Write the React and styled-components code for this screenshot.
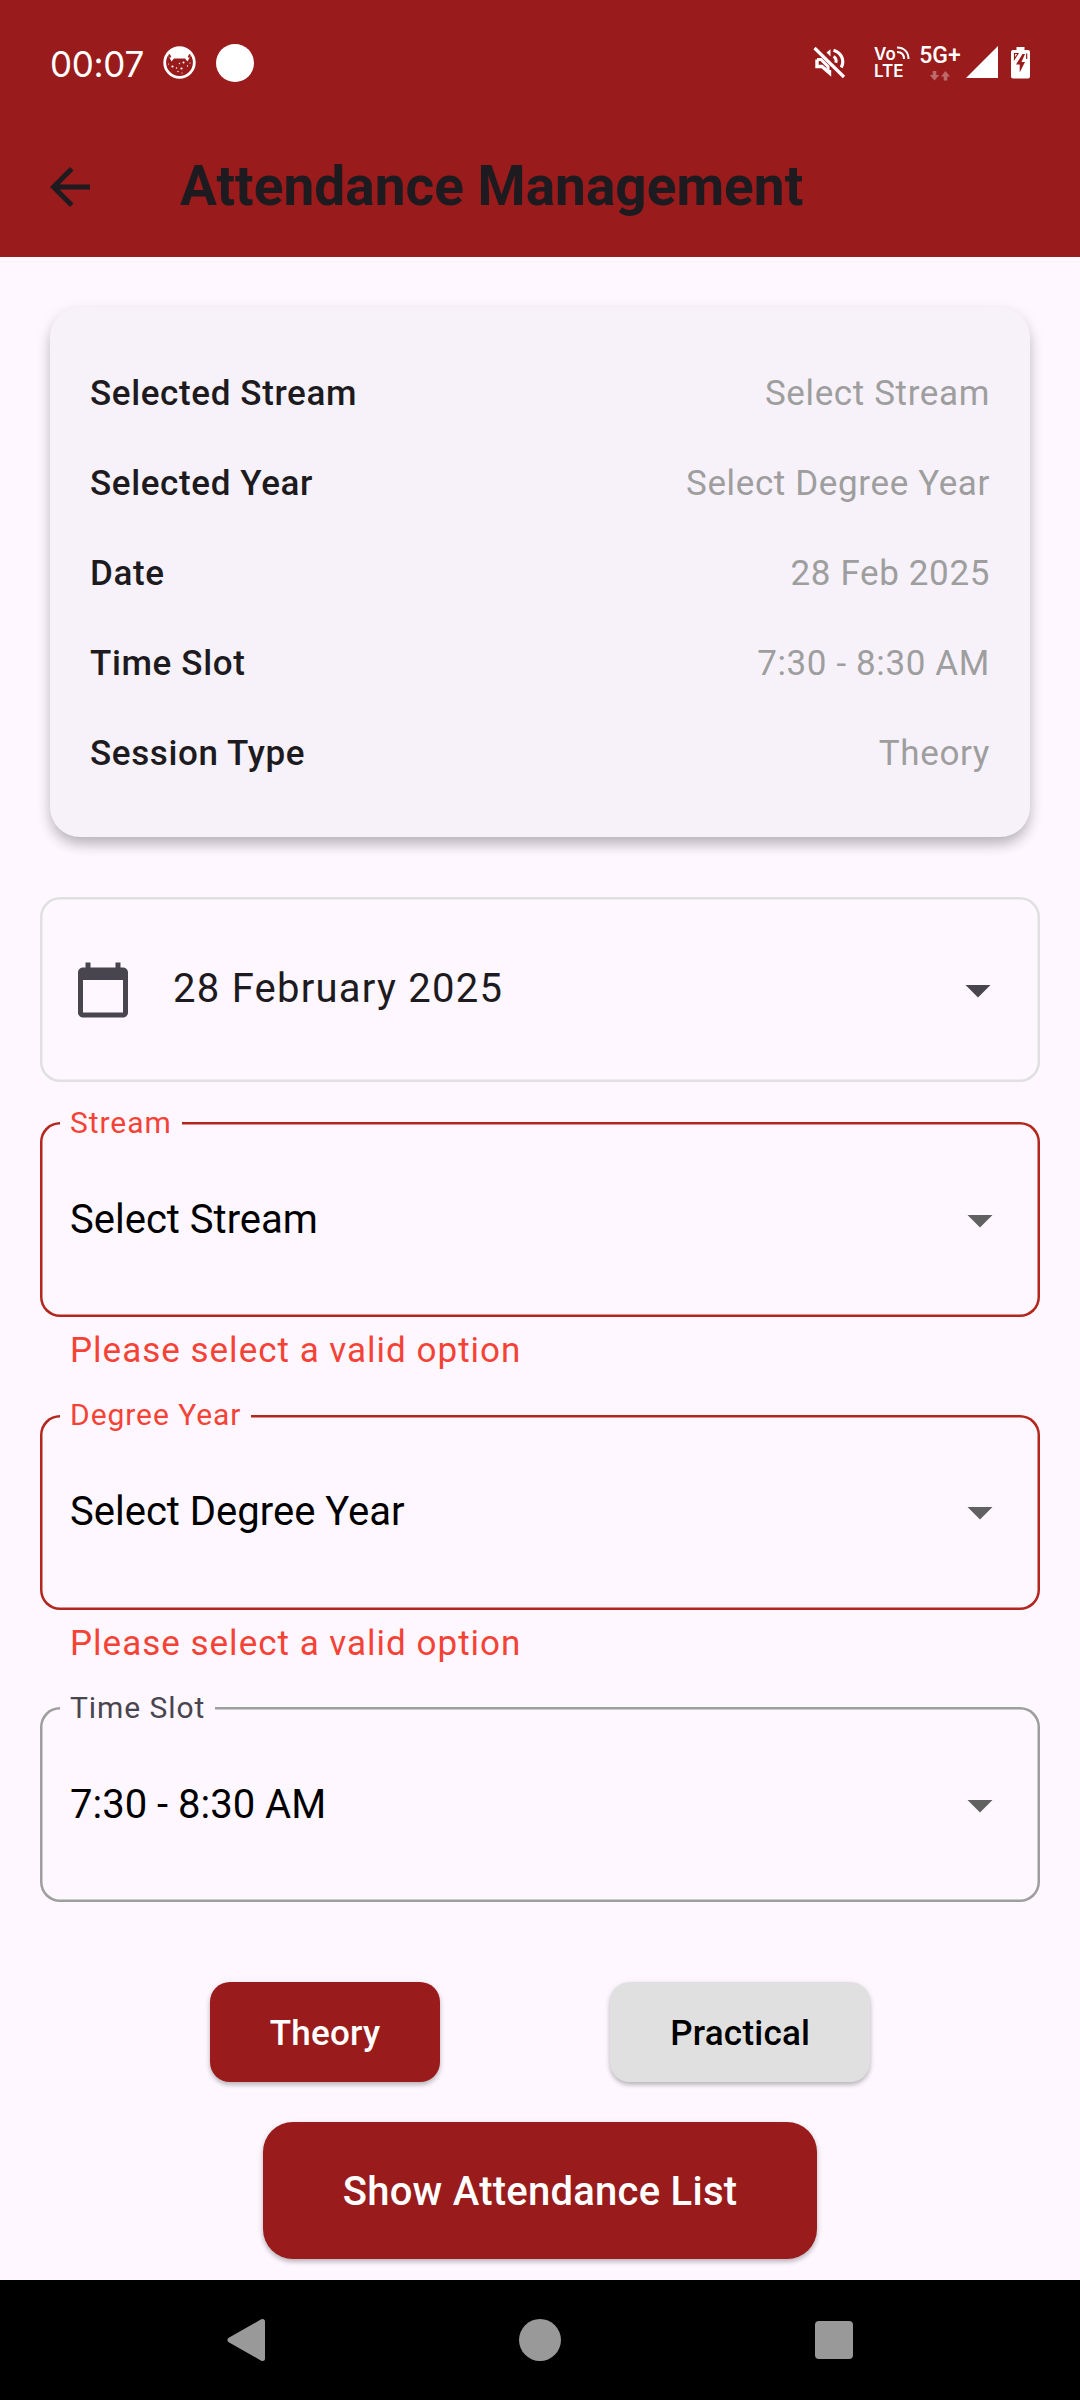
import React, { useState } from "react";
import styled, { createGlobalStyle } from "styled-components";

const GlobalStyle = createGlobalStyle`
  *, *::before, *::after { box-sizing: border-box; }
  html, body { margin: 0; padding: 0; background: #fef7ff; }
  body { font-family: Roboto, "Liberation Sans", sans-serif; }
  button { font: inherit; border: 0; margin: 0; padding: 0; background: none; cursor: pointer; }
`;

const Screen = styled.div`
  display: flex;
  flex-direction: column;
  width: 1080px;
  height: 2400px;
  background: #fef7ff;
  color: #1d1b20;
  overflow: hidden;
`;

const StatusBar = styled.header`
  display: flex;
  justify-content: space-between;
  align-items: center;
  height: 117px;
  padding: 8px 50px 0 50px;
  background: #991b1b;
  color: #fff;
`;

const StatusGroup = styled.div`
  display: flex;
  align-items: center;
`;

const Clock = styled.span`
  width: 113px;
  padding-top: 3px;
  font-family: Inter, sans-serif;
  font-size: 35px;
  line-height: 40px;
  letter-spacing: -0.3px;
`;

const NotificationDot = styled.span`
  width: 38px;
  height: 38px;
  margin-left: 20px;
  border-radius: 50%;
  background: #fff;
`;

const VoLte = styled.span`
  display: flex;
  flex-direction: column;
  width: 36px;
  margin-left: 28px;
  font: 600 17px/17px Inter, sans-serif;
`;

const VoRow = styled.span`
  display: flex;
  align-items: flex-start;
  height: 17px;
`;

const Network = styled.span`
  display: flex;
  flex-direction: column;
  align-items: center;
  gap: 4px;
  width: 42px;
  height: 36px;
  margin-left: 9px;
  font: 500 23px/22px Roboto, sans-serif;
`;

const AppBar = styled.div`
  display: flex;
  align-items: center;
  height: 140px;
  padding-left: 40px;
  gap: 80px;
  background: #991b1b;
`;

const BackButton = styled.button`
  display: flex;
  width: 60px;
  height: 60px;
  color: #1d1b20;
`;

const Title = styled.h1`
  margin: 0 0 2px;
  font-size: 55px;
  line-height: 70px;
  font-weight: 700;
`;

const Content = styled.main`
  display: flex;
  flex-direction: column;
  height: 2023px;
  padding: 50px 40px 0;
`;

const SummaryCard = styled.section`
  margin: 0 10px;
  padding: 42px 40px 38px;
  border-radius: 30px;
  background: #f7f2fa;
  box-shadow: 0 9px 14px -2px rgba(0, 0, 0, 0.2), 0 5px 15px rgba(0, 0, 0, 0.12);
`;

const SummaryRow = styled.div`
  display: flex;
  justify-content: space-between;
  align-items: center;
  height: 90px;
  font-size: 35px;
  line-height: 50px;
`;

const SummaryLabel = styled.span`
  font-weight: 500;
  letter-spacing: 0.625px;
`;

const SummaryValue = styled.span`
  color: #9e9e9e;
  letter-spacing: 0.625px;
`;

const Fields = styled.div`
  display: flex;
  flex-direction: column;
  margin-top: 60px;
`;

const DateField = styled.button`
  display: flex;
  align-items: center;
  height: 185px;
  margin-bottom: 40px;
  padding: 0 32.5px;
  border-radius: 20px;
  box-shadow: inset 0 0 0 2.5px #e0e0e0;
  color: #49454f;
  text-align: left;
`;

const DateText = styled.span`
  flex: 1;
  margin: 0 0 2px 40.5px;
  color: #1d1b20;
  font-size: 40px;
  line-height: 60px;
  letter-spacing: 1.25px;
`;

const FieldGroup = styled.div`
  height: ${(p) => (p.$error ? "292.5px" : "195px")};
`;

const Outline = styled.div`
  position: relative;
  display: flex;
  align-items: center;
  justify-content: space-between;
  height: 195px;
  padding: 0 30px;
  border-radius: 20px;
  box-shadow: inset 0 0 0 2.5px ${(p) => (p.$error ? "#b3261e" : "#9e9e9e")};
  color: #616161;
`;

const FloatingLabel = styled.label`
  position: absolute;
  top: -19.5px;
  left: 20px;
  padding: 0 10px;
  background: #fef7ff;
  color: ${(p) => (p.$error ? "#f44336" : "#49454f")};
  font-size: 30px;
  line-height: 40px;
  letter-spacing: 0.94px;
`;

const FieldValue = styled.span`
  color: #000;
  font-size: 40px;
  line-height: 60px;
`;

const ErrorText = styled.p`
  margin: 9px 30px 0;
  color: #f44336;
  font-size: 35px;
  line-height: 50px;
  letter-spacing: 1px;
`;

const SessionRow = styled.div`
  display: flex;
  justify-content: space-evenly;
  margin-top: 80px;
`;

const raised = "0 3px 4px rgba(0, 0, 0, 0.18), 0 2px 6px rgba(0, 0, 0, 0.12)";

const SessionButton = styled.button`
  height: 100px;
  border-radius: 20px;
  background: ${(p) => (p.$active ? "#991b1b" : "#e0e0e0")};
  color: ${(p) => (p.$active ? "#fff" : "#000")};
  box-shadow: ${raised};
  && { padding: 2px 60px 0; font-size: 35px; font-weight: 500; letter-spacing: 0.25px; }
`;

const SubmitButton = styled.button`
  align-self: center;
  height: 137px;
  margin-top: 40px;
  border-radius: 30px;
  background: #991b1b;
  color: #fff;
  box-shadow: ${raised};
  && { padding: 2px 80px 0; font-size: 40px; font-weight: 500; letter-spacing: 0.25px; }
`;

const NavBar = styled.nav`
  display: flex;
  align-items: center;
  justify-content: space-between;
  height: 120px;
  padding: 0 216px;
  background: #000;
`;

const NavButton = styled.button`
  display: flex;
  width: 60px;
  height: 60px;
`;

const DropIcon = () => (
  <svg width="60" height="60" viewBox="0 0 24 24" fill="currentColor">
    <path d="M7 10l5 5 5-5z" />
  </svg>
);

const CalendarIcon = () => (
  <svg width="60" height="60" viewBox="0 0 24 24" fill="currentColor">
    <path d="M20 3h-1V1h-2v2H7V1H5v2H4c-1.1 0-2 .9-2 2v16c0 1.1.9 2 2 2h16c1.1 0 2-.9 2-2V5c0-1.1-.9-2-2-2zm0 18H4V8h16v13z" />
  </svg>
);

const CatIcon = () => (
  <svg width="33" height="33" viewBox="0 0 33 33">
    <circle cx="16.5" cy="16.5" r="14.8" fill="none" stroke="#fff" strokeWidth="2.8" />
    <path d="M5 9C8 4 12 2 16.500 2S25 4 28 9L27 11L24.500 15.500L22 12.500H11L8.500 15.500L6 11Z" fill="#fff" />
    <path d="M6 8.500L7.500 11.500M27 8.500L25.500 11.500" stroke="#991b1b" strokeWidth="1.800" />
    <g fill="#fff">
      <circle cx="9.500" cy="20.500" r="1.100" />
      <circle cx="18.500" cy="22.500" r="1.100" />
      <circle cx="20.500" cy="16.500" r="1" />
      <circle cx="13.500" cy="22" r=".7" />
      <circle cx="24.500" cy="20" r=".7" />
      <circle cx="15" cy="25.500" r=".7" />
      <circle cx="16.500" cy="17.500" r=".7" />
      <circle cx="5.500" cy="18" r=".6" />
      <circle cx="27" cy="17" r=".6" />
      <circle cx="19" cy="27" r=".6" />
    </g>
  </svg>
);

const MuteIcon = () => (
  <svg width="33" height="33" viewBox="0 0 33 33" fill="none" stroke="#fff">
    <path d="M4 13.500V20.500H9L16.500 27V24" strokeWidth="3.400" />
    <path d="M4 13.500H8L15 20.500V26" strokeWidth="3" />
    <path d="M13.500 6.500L17.500 3.200V10.500Z" fill="#fff" stroke="none" />
    <path d="M20.500 10.500C23 12 23.500 14.500 22.800 16.800" strokeWidth="3" />
    <path d="M20.500 4.200C28.500 6.500 32 14.500 28.300 21.500" strokeWidth="3.200" />
    <path d="M1.500 2L31 31" strokeWidth="3.200" />
  </svg>
);

const WavesIcon = () => (
  <svg width="14" height="14" viewBox="0 0 14 14" fill="none" stroke="#fff" strokeWidth="2">
    <path d="M1 1.500C8 1.500 12.500 6 12.500 13" />
    <path d="M1 6C5.500 6 8 8.500 8 13" />
  </svg>
);

const DataArrows = () => (
  <svg width="20" height="10" viewBox="0 0 20 10" fill="#fff" opacity=".35">
    <path d="M2.700 0H6.300V4H9.200L4.500 9.500L-.2 4H2.700Z" />
    <path d="M13.700 9.500H17.300V5.500H20L15.500 0L11 5.500H13.700Z" />
  </svg>
);

const SignalIcon = styled.svg`
  margin-left: 4px;
`;

const BatteryIcon = styled.svg`
  margin-left: 13px;
`;

const SelectField = ({ label, value, error }) => (
  <FieldGroup $error={!!error}>
    <Outline $error={!!error}>
      <FloatingLabel $error={!!error}>{label}</FloatingLabel>
      <FieldValue>{value}</FieldValue>
      <DropIcon />
    </Outline>
    {error && <ErrorText>{error}</ErrorText>}
  </FieldGroup>
);

export default function App() {
  const [session, setSession] = useState("Theory");
  const summary = [
    ["Selected Stream", "Select Stream"],
    ["Selected Year", "Select Degree Year"],
    ["Date", "28 Feb 2025"],
    ["Time Slot", "7:30 - 8:30 AM"],
    ["Session Type", session],
  ];
  const error = "Please select a valid option";

  return (
    <Screen>
      <GlobalStyle />
      <StatusBar>
        <StatusGroup>
          <Clock>00:07</Clock>
          <CatIcon />
          <NotificationDot />
        </StatusGroup>
        <StatusGroup>
          <MuteIcon />
          <VoLte>
            <VoRow>Vo<WavesIcon /></VoRow>
            <span>LTE</span>
          </VoLte>
          <Network>5G+<DataArrows /></Network>
          <SignalIcon width="33" height="33" viewBox="0 0 33 33">
            <path d="M33 0V32H1Z" fill="#fff" />
          </SignalIcon>
          <BatteryIcon width="19" height="32" viewBox="0 0 19 32">
            <path d="M5.500 0H13.500V3H17Q19 3 19 5V29.500Q19 31.500 17 31.500H2Q0 31.500 0 29.500V5Q0 3 2 3H5.500Z" fill="#fff" />
            <path d="M11.500 7L5 17.500H8.700V25.500L14 15H10.500L14 7Z" fill="#991b1b" />
            <path d="M3.500 12V6.500H7ZM15.700 6.500V12" fill="none" stroke="#991b1b" strokeWidth="1.200" />
          </BatteryIcon>
        </StatusGroup>
      </StatusBar>
      <AppBar>
        <BackButton aria-label="Back">
          <svg width="60" height="60" viewBox="0 0 24 24" fill="currentColor">
            <path d="M20 11H7.830l5.590-5.590L12 4l-8 8 8 8 1.410-1.410L7.830 13H20v-2z" />
          </svg>
        </BackButton>
        <Title>Attendance Management</Title>
      </AppBar>
      <Content>
        <SummaryCard>
          {summary.map(([label, value]) => (
            <SummaryRow key={label}>
              <SummaryLabel>{label}</SummaryLabel>
              <SummaryValue>{value}</SummaryValue>
            </SummaryRow>
          ))}
        </SummaryCard>
        <Fields>
          <DateField>
            <CalendarIcon />
            <DateText>28 February 2025</DateText>
            <DropIcon />
          </DateField>
          <SelectField label="Stream" value="Select Stream" error={error} />
          <SelectField label="Degree Year" value="Select Degree Year" error={error} />
          <SelectField label="Time Slot" value="7:30 - 8:30 AM" />
        </Fields>
        <SessionRow>
          {["Theory", "Practical"].map((type) => (
            <SessionButton key={type} $active={session === type} onClick={() => setSession(type)}>
              {type}
            </SessionButton>
          ))}
        </SessionRow>
        <SubmitButton>Show Attendance List</SubmitButton>
      </Content>
      <NavBar>
        <NavButton aria-label="Back">
          <svg width="60" height="60" viewBox="0 0 60 60">
            <path d="M14 30L46.500 11.500V48.500Z" fill="#999" stroke="#999" strokeWidth="5" strokeLinejoin="round" />
          </svg>
        </NavButton>
        <NavButton aria-label="Home">
          <svg width="60" height="60" viewBox="0 0 60 60"><circle cx="30" cy="30" r="21" fill="#999" /></svg>
        </NavButton>
        <NavButton aria-label="Recents">
          <svg width="60" height="60" viewBox="0 0 60 60"><rect x="11" y="11" width="38" height="38" rx="4" fill="#999" /></svg>
        </NavButton>
      </NavBar>
    </Screen>
  );
}
